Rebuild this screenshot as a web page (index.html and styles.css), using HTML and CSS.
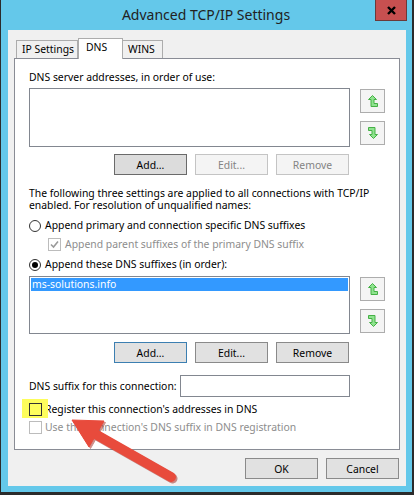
FILE: index.html
```html
<!DOCTYPE HTML>
<html>
<head>
  <meta name="viewport" content="width=device-width, initial-scale=1">
  <link rel="stylesheet" href="styles.css">
</head>
<body>
<div class="window">
  <div class="titlebar">
    <span></span>
    <span class="title">Advanced TCP/IP Settings</span>
    <span class="close"><svg width="9" height="9" viewBox="0 0 9 9"><path d="M1 1L8 8M8 1L1 8" stroke="#000" stroke-width="2.4"/></svg></span>
  </div>
  <div class="client">
    <div class="tabs">
      <div class="tab t-ip">IP Settings</div>
      <div class="tab sel t-dns">DNS</div>
      <div class="tab t-wins">WINS</div>
    </div>
    <div class="page">
      <div class="lbl first">DNS server addresses, in order of use:</div>
      <div class="listrow">
        <div class="listbox"></div>
        <div class="updown">
          <div class="arr up"><svg width="10" height="13" viewBox="0 0 10 13"><polygon points="4.5,0.5 8.5,4.5 6,4.5 6,8.5 9.5,8.5 9.5,11.5 3,11.5 3,4.5 0.5,4.5" fill="#8fe38f" stroke="#45b045" stroke-width="1"/></svg></div>
          <div class="arr down"><svg width="10" height="13" viewBox="0 0 10 13"><polygon points="4.5,0.5 8.5,4.5 6,4.5 6,8.5 9.5,8.5 9.5,11.5 3,11.5 3,4.5 0.5,4.5" fill="#8fe38f" stroke="#45b045" stroke-width="1" transform="rotate(180 5 6)"/></svg></div>
        </div>
      </div>
      <div class="btnrow">
        <button class="btn pressed">Add...</button>
        <button class="btn off">Edit...</button>
        <button class="btn off">Remove</button>
      </div>
      <p class="note">The following three settings are applied to all connections with TCP/IP enabled. For resolution of unqualified names:</p>
      <div class="opt r1"><span class="radio"></span>Append primary and connection specific DNS suffixes</div>
      <div class="opt sub grey"><span class="check dis"><svg width="11" height="11" viewBox="0 0 11 11"><path d="M2 5.5L4.5 8L9 2.5" fill="none" stroke="#9a9a9a" stroke-width="1.6"/></svg></span>Append parent suffixes of the primary DNS suffix</div>
      <div class="opt r2"><span class="radio on"></span>Append these DNS suffixes (in order):</div>
      <div class="listrow second">
        <div class="listbox"><div class="item">ms-solutions.info</div></div>
        <div class="updown">
          <div class="arr up"><svg width="10" height="13" viewBox="0 0 10 13"><polygon points="4.5,0.5 8.5,4.5 6,4.5 6,8.5 9.5,8.5 9.5,11.5 3,11.5 3,4.5 0.5,4.5" fill="#8fe38f" stroke="#45b045" stroke-width="1"/></svg></div>
          <div class="arr down"><svg width="10" height="13" viewBox="0 0 10 13"><polygon points="4.5,0.5 8.5,4.5 6,4.5 6,8.5 9.5,8.5 9.5,11.5 3,11.5 3,4.5 0.5,4.5" fill="#8fe38f" stroke="#45b045" stroke-width="1" transform="rotate(180 5 6)"/></svg></div>
        </div>
      </div>
      <div class="btnrow second">
        <button class="btn focus">Add...</button>
        <button class="btn">Edit...</button>
        <button class="btn">Remove</button>
      </div>
      <div class="suffix">
        <span>DNS suffix for this connection:</span>
        <div class="textbox"></div>
      </div>
      <div class="opt reg"><span class="check mark"></span>Register this connection's addresses in DNS</div>
      <div class="opt use grey"><span class="check dis"></span>Use this connection's DNS suffix in DNS registration</div>
    </div>
    <div class="footer">
      <button class="btn">OK</button>
      <button class="btn">Cancel</button>
    </div>
  </div>
  <svg class="overlay" width="414" height="495" viewBox="0 0 414 495">
    <g fill="#a8332b" stroke="#a8332b" opacity="0.55" transform="translate(1.5 1.5)">
      <line x1="171" y1="477" x2="97" y2="435" stroke-width="10" stroke-linecap="round"/>
      <polygon points="72,420 104,421 89,447" stroke-width="1"/>
    </g>
    <g fill="#e84b3c" stroke="#e84b3c">
      <line x1="171" y1="477" x2="97" y2="435" stroke-width="10" stroke-linecap="round"/>
      <polygon points="72,420 104,421 89,447" stroke-width="1" stroke-linejoin="round"/>
    </g>
  </svg>
</div>
</body>
</html>
```

FILE: styles.css
```css
body {margin: 0; font-family: "Noto Sans", Arial, sans-serif; font-size: 10.4px; color: #000;}
.window {position: relative; width: 414px; height: 495px; box-sizing: border-box; background: #64c8ea; border-left: 1px solid #2b2b2b; border-right: 2px solid #2b2b2b; border-bottom: 3px solid #2b2b2b;}

.titlebar {height: 30px; display: grid; grid-template-columns: 1fr auto 1fr; align-items: start;}
.title {font-size: 14px; line-height: 30px; color: #222; margin-left: -1px;}
.close {justify-self: end; margin-right: 5px; width: 32px; height: 21px; box-sizing: border-box; background: #c75050; border: 1px solid #6b3a3a; border-top: none; display: flex; align-items: center; justify-content: center;}
.close svg {margin-top: 1px;}

.client {margin: 0 6px 0 7px; height: 456px; box-sizing: border-box; background: #f0f0f0; padding: 8px 6px 0 6px;}

.tabs {display: flex; align-items: flex-end; height: 20px; padding-left: 2px; white-space: nowrap;}
.tab {box-sizing: border-box; height: 18px; line-height: 17px; border: 1px solid #acacac; border-bottom: none; background: #f0f0f0; padding-left: 5px;}
.t-ip {width: 62px;}
.t-wins {width: 40px; border-left: none;}
.tab.sel {position: relative; z-index: 1; width: 45px; height: 21px; margin-bottom: -1px; background: #fff; padding-left: 7px; line-height: 17px;}

.page {height: 392px; box-sizing: border-box; border: 1px solid #898c95; background: #fff; padding: 0 14px; white-space: nowrap;}
.lbl {line-height: 15px;}
.lbl.first {padding-top: 11px;}

.listrow {display: flex; margin-top: 3px;}
.listrow.second {margin-top: 4px;}
.listbox {width: 321px; height: 59px; box-sizing: border-box; border: 1px solid #828790; background: #fff; padding: 1px;}
.listrow.second .listbox {height: 58px;}
.item {background: #3399ff; color: #fff; height: 13px; line-height: 13px; padding-left: 1px;}
.updown {margin-left: 10px; width: 25px;}
.arr {box-sizing: border-box; height: 24px; border: 1px solid #adadad; background: #f4f4f4; display: flex; align-items: center; justify-content: center;}
.arr.up {margin-top: 1px;}
.arr.down {margin-top: 8px;}

.btnrow {display: flex; justify-content: flex-end; gap: 8px; width: 320px; margin-top: 7px;}
.btnrow.second {margin-top: 8px;}
.btn {width: 73px; height: 21px; box-sizing: border-box; border: 1px solid #8a8a8a; background: #e1e1e1; font: inherit; color: #000; padding: 0; line-height: 18px;}
.btn.pressed {background: #dcdcdc; border-color: #6a6a6a;}
.btn.focus {border-color: #3c7fb1;}
.btn.off {background: #f4f4f4; border-color: #c4c4c4; color: #838383;}

.note {margin: 12px 0 0; line-height: 12px; white-space: normal; width: 345px;}

.opt {display: flex; align-items: center; height: 15px; line-height: 15px;}
.opt.r1 {margin-top: 7px;}
.opt.sub {margin-top: 4px; padding-left: 19px;}
.opt.r2 {margin-top: 5px;}
.opt.reg {margin-top: 5px; position: relative;}
.opt.use {margin-top: 3px;}
.grey {color: #8d8d8d;}

.radio {width: 12px; height: 12px; box-sizing: border-box; border: 1px solid #333; border-radius: 50%; background: #fff; margin-right: 4px; display: flex; align-items: center; justify-content: center;}
.radio.on::after {content: ""; width: 6px; height: 6px; border-radius: 50%; background: #000;}

.check {width: 13px; height: 13px; box-sizing: border-box; border: 1px solid #333; background: #fff; margin-right: 3px; display: flex; align-items: center; justify-content: center;}
.check.dis {border-color: #bcbcbc; background: #fff;}
.opt.sub .check {margin-right: 4px;}
.check.mark {background: transparent; position: relative; z-index: 1;}
.opt.reg::before {content: ""; position: absolute; left: -7px; top: -3px; width: 26px; height: 19px; background: #fdfd5c;}
.opt.reg {color: #000;}

.suffix {display: flex; align-items: center; width: 321px; margin-top: 12px;}
.textbox {margin-left: auto; width: 170px; height: 22px; box-sizing: border-box; border: 1px solid #828790; background: #fff;}

.footer {display: flex; justify-content: flex-end; gap: 8px; margin-top: 8px; padding-right: 1px;}
.footer .btn {height: 21px;}

.overlay {position: absolute; left: -1px; top: 0; pointer-events: none;}
```
